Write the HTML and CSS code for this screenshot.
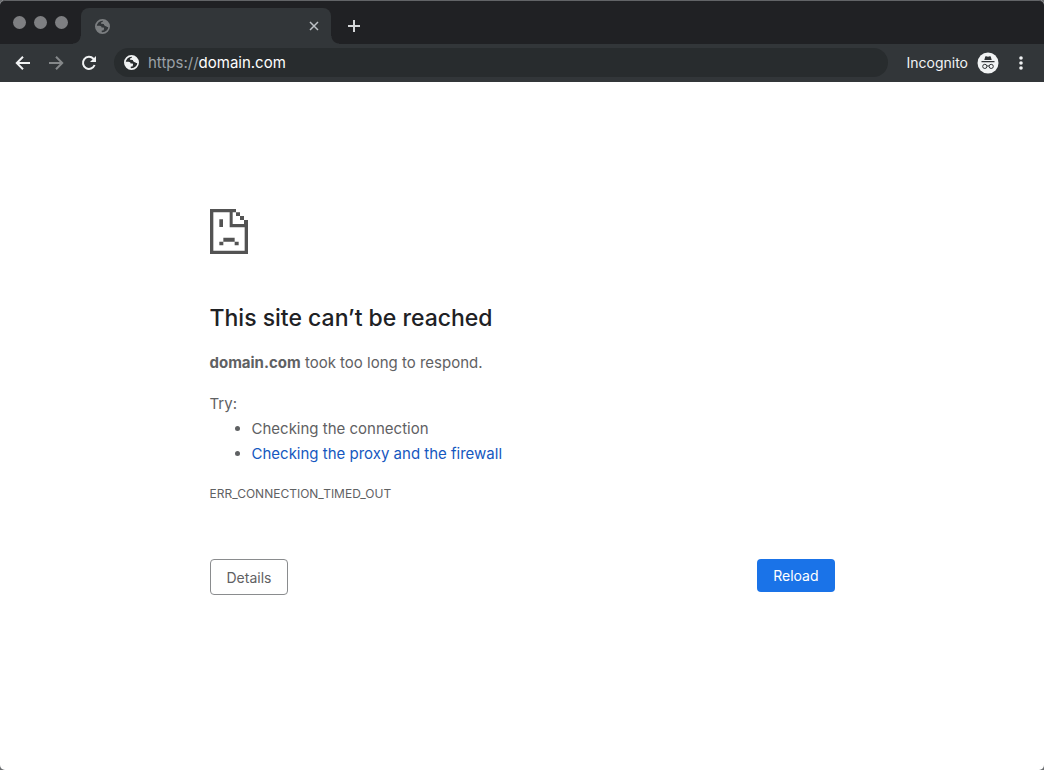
FILE: index.html
```html
<!DOCTYPE html>
<html lang="en">
<head>
    <meta charset="UTF-8">
    <meta name="viewport" content="width=device-width, initial-scale=1.0">
    <title>domain.com</title>
    <link rel="stylesheet" href="styles.css">
</head>
<body>
    <svg class="symbols" width="0" height="0" aria-hidden="true">
        <symbol id="globe" viewBox="0 0 16 16">
            <circle cx="8" cy="8" r="7.1" fill="none" stroke="currentColor" stroke-width="1.8"/>
            <path fill="currentColor" d="M1.2 7.2H4.8C6.2 7.2 7 8 7 9.1H8.6C9.5 9.1 9.9 9.8 9.6 10.6L9 12.2H7.3L7 14.8C3.8 14.6 1 11.8 1.2 7.2Z"/>
            <path fill="currentColor" d="M8.6 1C8.8 2.3 8.2 3.1 7 3.4C6.2 3.6 6.1 4.6 6.8 5.1L9.4 5.4C9.8 6.8 10.4 7.6 11.6 7.6C12.8 7.6 12.6 8.8 14.9 8.4C15.2 4.4 12.4 1.2 8.6 1Z"/>
        </symbol>
    </svg>

    <header>
        <div class="tabstrip">
            <div class="lights"><i></i><i></i><i></i></div>
            <div class="tab">
                <svg class="globe" aria-hidden="true"><use href="#globe"/></svg>
                <button class="close" aria-label="Close tab">
                    <svg width="10" height="10" viewBox="0 0 10 10"><path d="M1 1L9 9M9 1L1 9"/></svg>
                </button>
            </div>
            <button class="new-tab" aria-label="New tab">
                <svg width="14" height="14" viewBox="0 0 14 14"><path d="M7 1V13M1 7H13"/></svg>
            </button>
        </div>

        <nav class="toolbar">
            <button aria-label="Back">
                <svg width="16" height="16" viewBox="0 0 16 16"><path d="M15 8H2M8 1.8L1.8 8L8 14.2"/></svg>
            </button>
            <button class="dim" aria-label="Forward">
                <svg width="16" height="16" viewBox="0 0 16 16"><path d="M1 8H14M8 1.8L14.2 8L8 14.2"/></svg>
            </button>
            <button aria-label="Reload page">
                <svg width="16" height="16" viewBox="0 0 16 16">
                    <path d="M13.6 10A6 6 0 1 1 12.4 3.8L14 5.4"/>
                    <path class="solid" d="M15 1V7H9Z"/>
                </svg>
            </button>
            <div class="omnibox">
                <svg class="globe" aria-hidden="true"><use href="#globe"/></svg>
                <a href="https://domain.com"><span>https://</span>domain.com</a>
            </div>
            <span class="incognito">Incognito</span>
            <svg class="avatar" width="22" height="22" viewBox="0 0 22 22" aria-hidden="true">
                <circle cx="11" cy="11" r="10.5" fill="#f1f3f4"/>
                <path fill="#303336" d="M7.3 8L8.3 4.6Q8.5 4 9.1 4.2L11 4.8L12.9 4.2Q13.5 4 13.7 4.6L14.7 8ZM4.5 9H17.5V10.2H4.5Z"/>
                <path fill="none" stroke="#303336" d="M9.8 14.2Q11 13.5 12.2 14.2"/>
                <circle cx="7.8" cy="14.4" r="2.1" fill="none" stroke="#303336"/>
                <circle cx="14.2" cy="14.4" r="2.1" fill="none" stroke="#303336"/>
            </svg>
            <button class="menu" aria-label="Menu">
                <svg width="4" height="14" viewBox="0 0 4 14">
                    <circle cx="2" cy="2" r="1.8"/><circle cx="2" cy="7" r="1.8"/><circle cx="2" cy="12" r="1.8"/>
                </svg>
            </button>
        </nav>
    </header>

    <main>
        <svg class="sad-page" width="38" height="45" viewBox="0 0 114 135" aria-hidden="true">
            <path d="M0 0H78V10H68V45H114V135H0ZM10 10V125H104V55H59V10Z" fill-rule="evenodd"/>
            <path d="M78 10H90V21H78ZM90 21H102V33H90ZM102 33H114V45H102Z"/>
            <path d="M28 31H39V54H28ZM40 86H74V98H40ZM28 98H40V109H28ZM74 98H86V109H74Z"/>
        </svg>
        <h1>This site can’t be reached</h1>
        <p><strong>domain.com</strong> took too long to respond.</p>
        <div class="suggestions">
            <p>Try:</p>
            <ul>
                <li>Checking the connection</li>
                <li><a href="#proxy">Checking the proxy and the firewall</a></li>
            </ul>
        </div>
        <div class="error-code">ERR_CONNECTION_TIMED_OUT</div>
        <div class="buttons">
            <button class="details">Details</button>
            <button class="reload">Reload</button>
        </div>
    </main>
</body>
</html>
```
FILE: styles.css
```css
* {
    box-sizing: border-box;
}

html {
    background-color: #6b6d70;
}

body {
    min-height: 100vh;
    margin: 0;
    border-radius: 5px;
    background-color: #fff;
    color: #5f6163;
    font-family: Inter, "Liberation Sans", sans-serif;
    font-size: 15px;
    line-height: 25px;
}

button {
    border: 0;
    padding: 0;
    background: none;
    color: inherit;
    font: inherit;
}

svg {
    display: block;
}

.symbols {
    position: absolute;
}

header {
    border-radius: 5px 5px 0 0;
    background-color: #323639;
    color: #f1f3f4;
    font-size: 14px;
}

/* tabs */
.tabstrip {
    display: flex;
    height: 44px;
    border-top: 1px solid #626467;
    border-radius: 5px 5px 0 0;
    background-color: #202124;
}

.lights {
    display: flex;
    gap: 8px;
    padding: 15px 13px;
}

.lights i {
    width: 13px;
    height: 13px;
    border-radius: 50%;
    background-color: #7e7f82;
}

.tab {
    position: relative;
    display: flex;
    align-items: center;
    justify-content: space-between;
    width: 250px;
    margin-top: 7px;
    padding: 0 12px 0 14px;
    border-radius: 8px 8px 0 0;
    background-color: #323639;
}

/* flared feet of the tab */
.tab::before, .tab::after {
    content: "";
    position: absolute;
    bottom: 0;
    width: 8px;
    height: 8px;
}

.tab::before {
    right: 100%;
    background: radial-gradient(circle at 0 0, transparent 7px, #323639 8px);
}

.tab::after {
    left: 100%;
    background: radial-gradient(circle at 100% 0, transparent 7px, #323639 8px);
}

.globe {
    width: 15px;
    height: 15px;
}

.tab .globe {
    color: #7b7e80;
}

.close svg, .new-tab svg, .toolbar button svg {
    fill: none;
    stroke: currentColor;
    stroke-width: 2;
}

.close {
    color: #bdc1c6;
}

.close svg {
    stroke-width: 1.5;
}

.new-tab {
    padding: 7px 16px 0;
    color: #d5d7d9;
}

/* toolbar */
.toolbar {
    display: flex;
    align-items: center;
    height: 38px;
    padding: 0 21px 1px 15px;
}

.toolbar > button {
    margin-right: 17px;
}

.toolbar .dim {
    color: #85888a;
}

.toolbar .solid {
    fill: currentColor;
    stroke: none;
}

.toolbar .menu {
    margin: 0 0 0 20px;
}

.toolbar .menu svg {
    fill: currentColor;
    stroke: none;
}

.omnibox {
    display: flex;
    flex: 1;
    align-items: center;
    gap: 9px;
    height: 29px;
    margin-right: 18px;
    padding: 0 10px;
    border-radius: 15px;
    background-color: #282c2e;
}

.omnibox a {
    color: #fff;
    font-size: 15px;
    text-decoration: none;
}

.omnibox span {
    color: #9aa0a6;
}

.incognito {
    margin-right: 9px;
}

/* error page */
main {
    max-width: 625px;
    margin: 0 auto;
    padding-top: 127px;
}

.sad-page {
    fill: #535353;
}

h1 {
    margin: 48px 0 16px;
    color: #202124;
    font-size: 23px;
    font-weight: 500;
    line-height: 32px;
}

p {
    margin: 0;
}

.suggestions {
    margin: 16px 0 15px;
}

ul {
    margin: 0;
    padding-left: 42px;
}

a {
    color: #1558c0;
    text-decoration: none;
}

.error-code {
    font-size: 12px;
}

.buttons {
    display: flex;
    align-items: flex-start;
    justify-content: space-between;
    margin-top: 53px;
}

.buttons button {
    height: 33px;
    padding: 0 16px;
    border-radius: 4px;
    font-size: 14px;
}

.buttons .details {
    height: 36px;
    border: 1px solid #8a8c8e;
}

.buttons .reload {
    background-color: #1a73e8;
    color: #fff;
}
```
